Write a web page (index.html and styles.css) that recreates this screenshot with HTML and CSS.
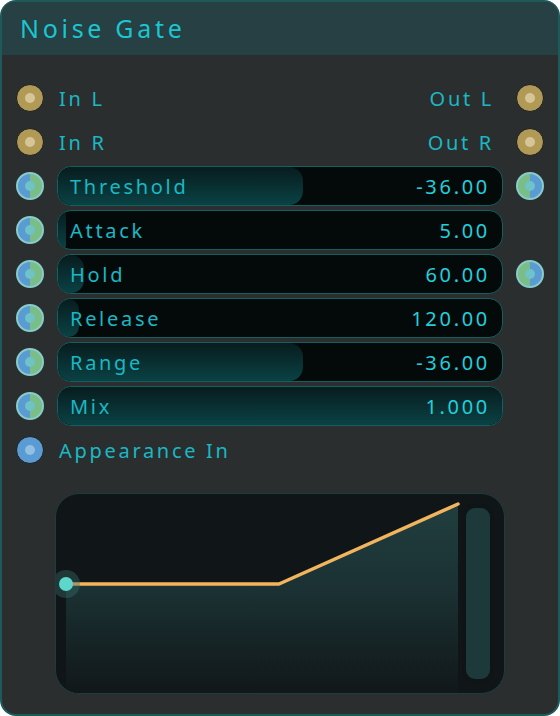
FILE: index.html
```html
<!DOCTYPE html>
<html>
<head>
<meta charset="utf-8">
<link rel="stylesheet" href="styles.css">
</head>
<body>
<div class="panel">
  <div class="header">Noise Gate</div>
  <div class="rows">
    <div class="row">
      <span class="port gold"></span>
      <div class="io"><span class="label">In L</span><span class="label">Out L</span></div>
      <span class="port gold"></span>
    </div>
    <div class="row">
      <span class="port gold"></span>
      <div class="io"><span class="label">In R</span><span class="label">Out R</span></div>
      <span class="port gold"></span>
    </div>
    <div class="row">
      <span class="port split"></span>
      <div class="slider"><div class="fill" style="width:245px"></div><span class="label">Threshold</span><span class="value">-36.00</span></div>
      <span class="port split rev"></span>
    </div>
    <div class="row">
      <span class="port split"></span>
      <div class="slider"><div class="fill" style="width:8px"></div><span class="label">Attack</span><span class="value">5.00</span></div>
      <span class="slot"></span>
    </div>
    <div class="row">
      <span class="port split"></span>
      <div class="slider"><div class="fill" style="width:26px"></div><span class="label">Hold</span><span class="value">60.00</span></div>
      <span class="port split rev"></span>
    </div>
    <div class="row">
      <span class="port split"></span>
      <div class="slider"><div class="fill" style="width:21px"></div><span class="label">Release</span><span class="value">120.00</span></div>
      <span class="slot"></span>
    </div>
    <div class="row">
      <span class="port split"></span>
      <div class="slider"><div class="fill" style="width:245px"></div><span class="label">Range</span><span class="value">-36.00</span></div>
      <span class="slot"></span>
    </div>
    <div class="row">
      <span class="port split"></span>
      <div class="slider"><div class="fill" style="width:100%"></div><span class="label">Mix</span><span class="value">1.000</span></div>
      <span class="slot"></span>
    </div>
    <div class="row">
      <span class="port blue"></span>
      <div class="io"><span class="label">Appearance In</span></div>
      <span class="slot"></span>
    </div>
  </div>
  <div class="graph">
    <svg width="450" height="201" viewBox="0 0 450 201">
      <defs>
        <linearGradient id="g" x1="0" y1="11" x2="0" y2="201" gradientUnits="userSpaceOnUse">
          <stop offset="0" stop-color="#213e3f"/>
          <stop offset="0.45" stop-color="#1b3133"/>
          <stop offset="1" stop-color="#111719"/>
        </linearGradient>
      </defs>
      <polygon points="11,91 225,91 403,11 403,201 11,201" fill="url(#g)"/>
      <polyline points="11,91 224,91 403,11" fill="none" stroke="#f2b55e" stroke-width="3.5" stroke-linejoin="round" stroke-linecap="round"/>
      <rect x="407" y="11" width="32" height="179" rx="12" fill="#0f1517"/>
      <rect x="411" y="15" width="24" height="171" rx="9" fill="#1e3939"/>
      <circle cx="11" cy="91" r="14" fill="#3a6e6c" fill-opacity="0.4"/>
      <circle cx="11" cy="91" r="7" fill="#5dd7cc"/>
    </svg>
  </div>
</div>
</body>
</html>
```

FILE: styles.css
```css
html, body {
  margin: 0;
  padding: 0;
  background: #ffffff;
}
body {
  font-family: "Noto Sans", "DejaVu Sans", sans-serif;
}
.panel {
  width: 560px;
  height: 716px;
  box-sizing: border-box;
  border: 2px solid #1f5a5a;
  border-radius: 16px;
  overflow: hidden;
  background: #2b2e2f;
}
.header {
  height: 53px;
  background: #264044;
  color: #1ac6d0;
  font-size: 25px;
  letter-spacing: 3.7px;
  line-height: 52px;
  padding-left: 18px;
}
.rows {
  padding: 21px 14px 0 14px;
  display: flex;
  flex-direction: column;
}
.row {
  height: 44px;
  display: flex;
  align-items: center;
  gap: 13px;
}
.port, .slot {
  width: 28px;
  height: 28px;
  flex: none;
  box-sizing: border-box;
  border-radius: 50%;
  position: relative;
}
.port::after {
  content: "";
  position: absolute;
  left: 50%;
  top: 50%;
  width: 10px;
  height: 10px;
  margin: -5px 0 0 -5px;
  border-radius: 50%;
}
.gold {
  background: #b19a56;
  border: 1.5px solid #1c1e1e;
}
.gold::after {
  background: #d6c597;
}
.blue {
  background: #5b9bd3;
  border: 1.5px solid #1c1e1e;
}
.blue::after {
  background: #92c0e2;
}
.split {
  background: linear-gradient(90deg, #5b9bd3 50%, #7abd86 50%);
  border: 2px solid #87cccb;
}
.split.rev {
  background: linear-gradient(90deg, #7abd86 50%, #5b9bd3 50%);
}
.split::after {
  background: #6ec3c6;
}
.io {
  flex: 1;
  display: flex;
  justify-content: space-between;
  padding: 0 9px 0 2px;
}
.label {
  color: #19b8c4;
  font-size: 20px;
  letter-spacing: 2.7px;
}
.value {
  color: #22cfdc;
  font-size: 20px;
  letter-spacing: 2.7px;
}
.slider {
  flex: 1;
  height: 40px;
  box-sizing: border-box;
  border: 1px solid #136062;
  border-radius: 14px;
  background: #04090a;
  position: relative;
  overflow: hidden;
  display: flex;
  align-items: center;
  justify-content: space-between;
  padding: 0 12px 0 12px;
}
.fill {
  position: absolute;
  left: 0;
  top: 0;
  bottom: 0;
  border-radius: 14px;
  background: linear-gradient(180deg, #081c1e 0%, #0a4244 100%);
}
.slider .label, .slider .value {
  position: relative;
}
.graph {
  margin: 21px 53px 0 53px;
  height: 201px;
  box-sizing: border-box;
  border: 1px solid #1c3c3e;
  border-radius: 24px;
  background: #101517;
  overflow: hidden;
}
.graph svg {
  display: block;
  margin: -1px;
}
```
